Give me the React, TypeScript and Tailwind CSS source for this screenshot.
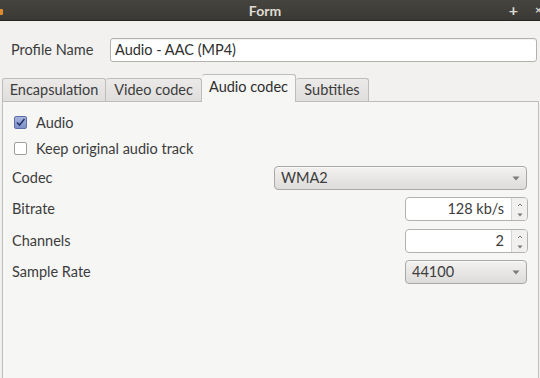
import React from "react";

const font = { fontFamily: "Lato, 'Noto Sans', sans-serif" };

function SpinArrows() {
  return (
    <div className="flex w-[16px] flex-col items-center justify-center border-l border-[#d6d5d3] bg-[#f1f0ef]">
      <svg width="6" height="8" viewBox="0 0 6 8" className="mb-[3px]">
        <path d="M1 4 L3 2 L5 4" fill="none" stroke="#777" strokeWidth="1" />
      </svg>
      <svg width="6" height="4" viewBox="0 0 6 4">
        <path d="M0.5 0.5 L5.5 0.5 L3 3.5 Z" fill="#777" />
      </svg>
    </div>
  );
}

function Combo({ value, className }: { value: string; className: string }) {
  return (
    <div
      className={`flex h-[24px] items-center justify-between rounded-[4px] border border-[#a9a8a5] bg-gradient-to-b from-[#f3f2f1] to-[#dddcda] pl-[6px] pr-[6px] text-[14.5px] text-[#3c3c3c] shadow-[inset_0_1px_0_#fafafa] ${className}`}
    >
      <span>{value}</span>
      <svg width="8" height="5" viewBox="0 0 8 5">
        <path d="M0.5 0.5 L7.5 0.5 L4 4.5 Z" fill="#7b7b7b" />
      </svg>
    </div>
  );
}

function Spin({ value }: { value: string }) {
  return (
    <div className="flex h-[24px] w-[123px] overflow-hidden rounded-[4px] border border-[#b3b2af] bg-white">
      <div className="flex flex-1 items-center justify-end pr-[7px] text-[14.5px] text-[#3c3c3c]">{value}</div>
      <SpinArrows />
    </div>
  );
}

export default function App() {
  return (
    <div className="h-[378px] w-[540px] overflow-hidden bg-[#f2f1f0] text-[14.5px]" style={font}>
      {/* Title bar */}
      <div className="relative flex h-[21px] items-center justify-center border-b border-[#26251f] bg-gradient-to-b from-[#45443f] to-[#3a3935]">
        <div className="absolute left-[-3px] top-[9px] h-[6px] w-[6px] rounded-[1px] bg-[#e08a2e]" />
        <span className="ml-[-10px] text-[14px] font-bold text-[#dfdbd2]">Form</span>
        <span className="absolute right-[22px] top-[0px] text-[16px] font-bold leading-[20px] text-[#dfdbd2]">+</span>
        <span className="absolute right-[-2px] top-[0px] text-[12px] font-bold leading-[20px] text-[#dfdbd2]">×</span>
      </div>

      {/* Profile name */}
      <div className="flex items-center pl-[11px] pt-[17px]">
        <span className="w-[99px] text-[#3c3c3c]">Profile Name</span>
        <div className="flex h-[24px] w-[427px] items-center rounded-[3px] border border-[#b3b2af] bg-white pl-[4px] text-[#2e2e2e] shadow-[inset_0_1px_1px_rgba(0,0,0,0.06)]">
          Audio - AAC (MP4)
        </div>
      </div>

      {/* Tabs */}
      <div className="mt-[12px] flex h-[27px] items-end pl-[2px]">
        <div className="flex h-[23px] w-[104px] items-center justify-center rounded-t-[3px] border border-b-0 border-[#bebdba] bg-gradient-to-b from-[#ebeae8] to-[#dfdedc] text-[#3c3c3c]">
          Encapsulation
        </div>
        <div className="flex h-[23px] w-[96px] items-center justify-center rounded-t-[3px] border border-b-0 border-l-0 border-[#bebdba] bg-gradient-to-b from-[#ebeae8] to-[#dfdedc] text-[#3c3c3c]">
          Video codec
        </div>
        <div className="relative z-10 mb-[-1px] flex h-[28px] w-[94px] items-center justify-center rounded-t-[3px] border border-b-0 border-l-0 border-[#bebdba] bg-[#f6f6f5] pb-[3px] text-[#2e2e2e]">
          Audio codec
        </div>
        <div className="flex h-[23px] w-[73px] items-center justify-center rounded-t-[3px] border border-b-0 border-l-0 border-[#bebdba] bg-gradient-to-b from-[#ebeae8] to-[#dfdedc] text-[#3c3c3c]">
          Subtitles
        </div>
      </div>

      {/* Panel */}
      <div className="ml-[2px] mr-[1px] h-[290px] border border-[#bebdba] bg-[#f6f6f5] text-[#3c3c3c]">
        <div className="flex flex-col pl-[9px] pt-[13px]">
          <div className="flex h-[15px] items-center pl-[2px]">
            <div className="flex h-[13px] w-[13px] items-center justify-center rounded-[2px] border border-[#5d6fa6] bg-gradient-to-b from-[#a6b3dc] to-[#7e90c8]">
              <svg width="11" height="11" viewBox="0 0 11 11">
                <path d="M2 5.5 L4.5 8 L9.5 2" fill="none" stroke="#273470" strokeWidth="1.6" />
              </svg>
            </div>
            <span className="ml-[9px]">Audio</span>
          </div>
          <div className="mt-[11px] flex h-[15px] items-center pl-[2px]">
            <div className="h-[13px] w-[13px] rounded-[2px] border border-[#9f9e9b] bg-white" />
            <span className="ml-[9px]">Keep original audio track</span>
          </div>

          <div className="mt-[10px] flex h-[24px] items-center">
            <span className="w-[262px]">Codec</span>
            <Combo value="WMA2" className="w-[253px]" />
          </div>
          <div className="mt-[7px] flex h-[24px] items-center">
            <span className="w-[393px]">Bitrate</span>
            <Spin value="128 kb/s" />
          </div>
          <div className="mt-[8px] flex h-[24px] items-center">
            <span className="w-[393px]">Channels</span>
            <Spin value="2" />
          </div>
          <div className="mt-[7px] flex h-[24px] items-center">
            <span className="w-[393px]">Sample Rate</span>
            <Combo value="44100" className="w-[122px]" />
          </div>
        </div>
      </div>
    </div>
  );
}
